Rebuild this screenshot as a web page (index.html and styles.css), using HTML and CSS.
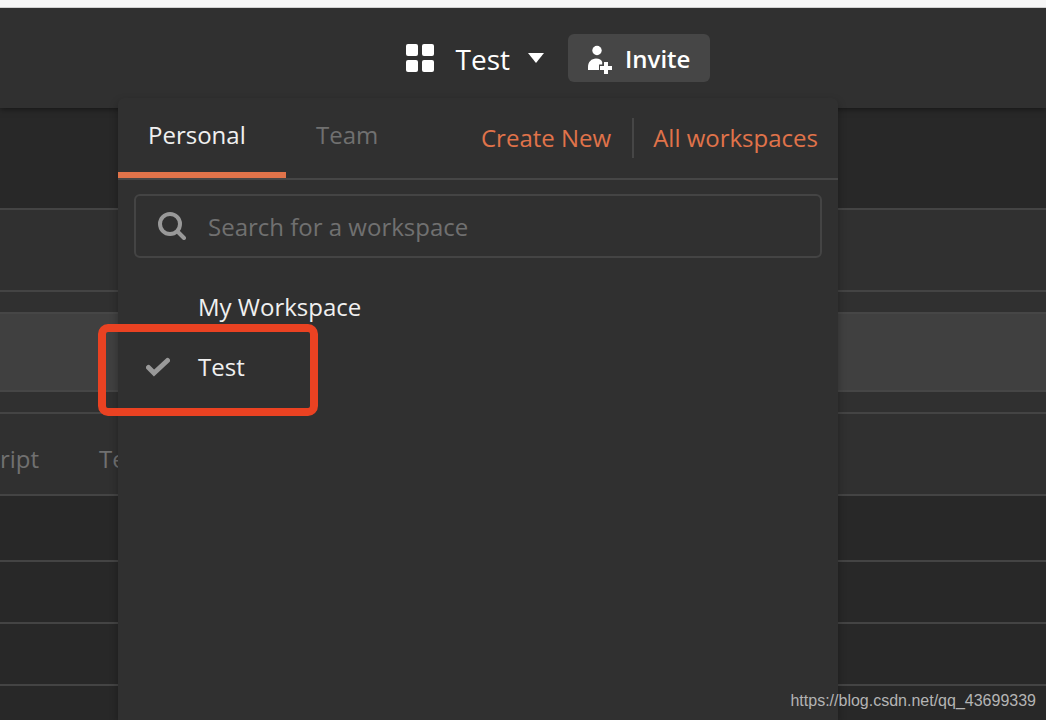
FILE: index.html
```html
<!DOCTYPE html>
<html lang="en">
<head>
<meta charset="utf-8">
<title>Workspaces</title>
<link rel="stylesheet" href="styles.css">
</head>
<body>
<div class="app">
  <div class="titlebar"></div>
  <header class="header">
    <button class="switcher" type="button">
      <svg width="28" height="28" viewBox="0 0 28 28" fill="currentColor" aria-hidden="true">
        <rect width="12" height="12" rx="2"/><rect x="16" width="12" height="12" rx="2"/>
        <rect y="16" width="12" height="12" rx="2"/><rect x="16" y="16" width="12" height="12" rx="2"/>
      </svg>
      <span class="switcher-name">Test</span>
      <svg width="16" height="10" viewBox="0 0 16 10" fill="currentColor" aria-hidden="true"><path d="M0 0h16L8 10z"/></svg>
    </button>
    <button class="invite" type="button">
      <svg width="26" height="32" viewBox="0 0 26 32" fill="currentColor" aria-hidden="true">
        <circle cx="10" cy="8.500" r="4.700"/>
        <path d="M1 28v-3c0-5 3.500-8.500 8-8.500 3.500 0 5.500 1.500 6.200 3.500v2.500H12V28z"/>
        <path d="M17 20h4v4h4v4h-4v4h-4v-4h-4v-4h4z"/>
      </svg>
      <span>Invite</span>
    </button>
  </header>
  <main class="page">
    <div class="blank"></div>
    <div class="panel name-panel"></div>
    <div class="panel gap-panel"></div>
    <div class="request-bar"></div>
    <div class="gap"></div>
    <nav class="panel request-tabs">
      <span class="request-tab">ript</span>
      <span class="request-tab">Te</span>
    </nav>
    <div class="rows">
      <div class="row row-head"></div>
      <div class="row"></div>
      <div class="row"></div>
      <div class="row"></div>
    </div>
  </main>
  <section class="menu" aria-label="Workspaces">
    <div class="menu-head">
      <button class="tab tab-active" type="button">Personal</button>
      <button class="tab" type="button">Team</button>
      <div class="links">
        <a class="link" href="#new">Create New</a>
        <a class="link link-all" href="#all">All workspaces</a>
      </div>
    </div>
    <label class="search">
      <svg width="28" height="28" viewBox="0 0 28 28" fill="none" stroke="currentColor" stroke-width="4" stroke-linecap="round" aria-hidden="true"><circle cx="12" cy="12" r="10"/><path d="M20 20l6 6"/></svg>
      <input class="search-input" type="text" aria-label="Search for a workspace" placeholder="Search for a workspace">
    </label>
    <ul class="list">
      <li><button class="item" type="button"><span class="mark"></span>My Workspace</button></li>
      <li><button class="item" type="button"><span class="mark"><svg width="24" height="20" viewBox="0 0 24 20" fill="none" stroke="currentColor" stroke-width="5" stroke-linecap="round" aria-hidden="true"><path d="M2.500 10.500L8 16 21.500 3.500" stroke-linejoin="miter"/></svg></span>Test</button></li>
    </ul>
  </section>
  <div class="highlight"></div>
  <div class="watermark">https://blog.csdn.net/qq_43699339</div>
</div>
</body>
</html>
```

FILE: styles.css
```css
* { box-sizing: border-box; }
body { margin: 0; background: #282828; color: #f0f0f0; font: 24px/32px "Open Sans", sans-serif; }
button { padding: 0; border: 0; background: none; color: inherit; font: inherit; cursor: pointer; }
svg { display: block; flex: none; }
.app { position: relative; display: flex; flex-direction: column; height: 100vh; overflow: hidden; }
.titlebar { flex: none; height: 8px; background: #f6f6f6; border-bottom: 1px solid #d0d0d0; }
.header {
  display: flex; flex: none; align-items: center; justify-content: center; gap: 24px;
  height: 100px; padding-left: 70px; background: #303030; color: #fff; box-shadow: 0 1px 6px rgba(0, 0, 0, 0.5);
  clip-path: inset(0 0 -12px 0); z-index: 1;
}
.switcher { display: flex; align-items: center; }
.switcher-name { margin: 0 18px 0 22px; padding-top: 2px; font-size: 28px; line-height: 36px; }
.invite {
  display: flex; align-items: center; gap: 12px; height: 48px; padding: 0 20px 0 19px;
  border-radius: 6px; background: #464646; font-weight: 600;
}
.invite span { padding-top: 2px; }
.blank { height: 100px; }
.panel { border-top: 2px solid #444; background: #303030; }
.name-panel { height: 82px; }
.gap-panel { height: 22px; }
.request-bar { height: 80px; border: solid #464646; border-width: 2px 0; background: #404040; }
.gap { height: 20px; background: #303030; }
.request-tabs { display: flex; align-items: center; gap: 60px; height: 82px; padding-top: 10px; color: #707070; }
.row { height: 62px; border-top: 2px solid #444; }
.row-head { height: 66px; }
.menu {
  position: absolute; top: 98px; bottom: 0; left: 118px; z-index: 2; width: 720px;
  border-radius: 6px 6px 0 0; background: #303030; box-shadow: 0 4px 8px rgba(0, 0, 0, 0.3);
}
.menu-head { display: flex; height: 82px; border-bottom: 2px solid #464646; }
.tab { padding: 0 30px; border-bottom: 6px solid transparent; color: #707070; }
.tab-active { width: 168px; border-color: #e0734a; color: #f0f0f0; text-align: left; }
.links { display: flex; align-items: center; margin-left: auto; padding-right: 20px; }
.link { padding-right: 21px; color: #e0734a; line-height: 40px; text-decoration: none; }
.link-all { padding: 0 0 0 19px; border-left: 2px solid #464646; }
.search {
  display: flex; align-items: center; gap: 22px; height: 64px; margin: 14px 16px 19px; padding: 0 22px;
  border: 2px solid #444; border-radius: 6px; color: #999;
}
.search-input { flex: 1; min-width: 0; padding: 2px 0 0; border: 0; outline: 0; background: none; color: #f0f0f0; font: inherit; }
.search-input::placeholder { color: #707070; opacity: 1; }
.list { margin: 0; padding: 0; list-style: none; }
.item { display: flex; align-items: center; width: 100%; height: 60px; padding-left: 28px; }
.mark { width: 52px; color: #999; }
.highlight { position: absolute; top: 324px; left: 98px; z-index: 3; width: 220px; height: 92px; border: 8px solid #ea4222; border-radius: 10px; }
.watermark { position: absolute; right: 10px; bottom: 9px; z-index: 3; color: #b4b4b4; font: 16px/20px "Liberation Sans", Arial, sans-serif; }
```
